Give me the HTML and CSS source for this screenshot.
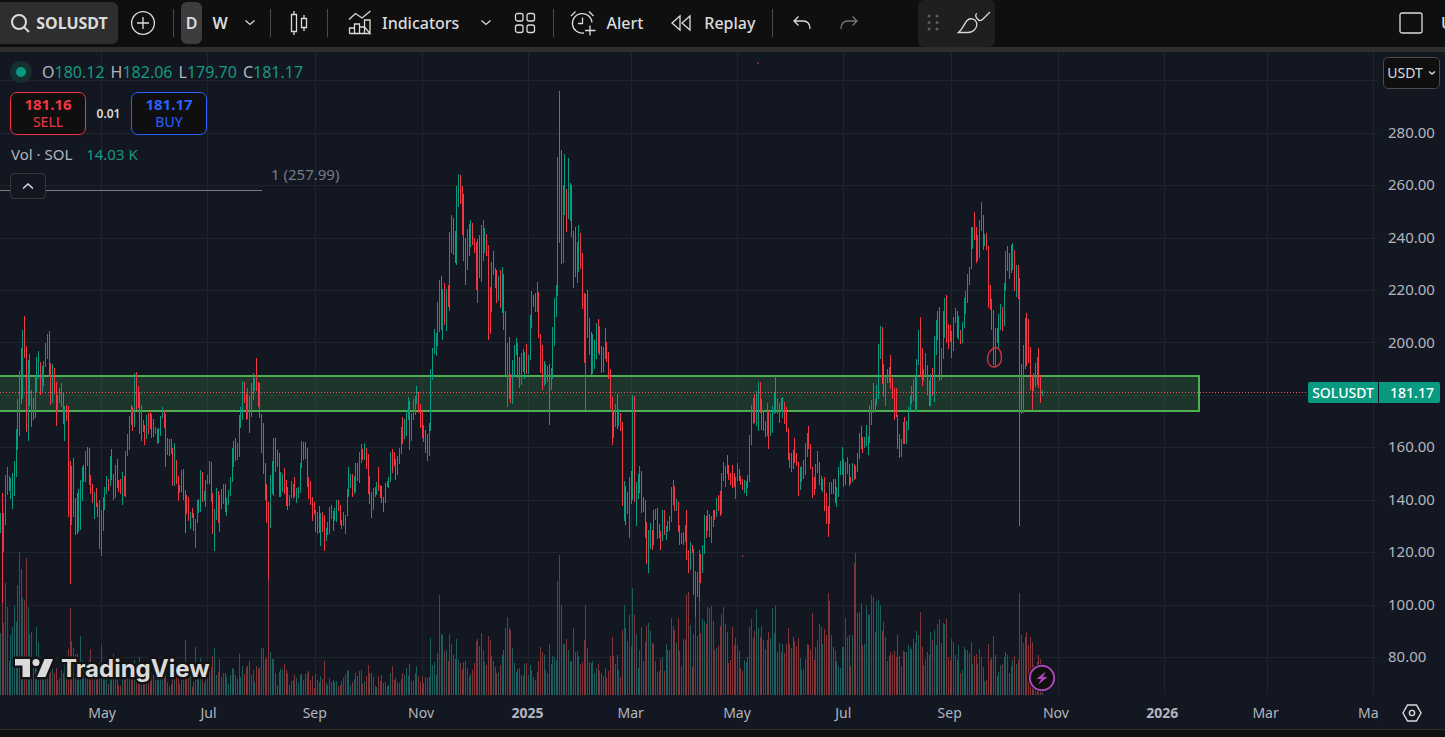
FILE: index.html
```html
<!DOCTYPE html>
<html lang="en">

<head>
    <meta charset="UTF-8">
    <meta name="viewport" content="width=device-width, initial-scale=1.0">
    <title>SOLUSDT 181.17</title>
    <link rel="stylesheet" href="styles.css">
</head>

<body>
    <header class="toolbar">
        <button class="symbol-btn">
            <svg width="20" height="20" viewBox="0 0 20 20"><circle cx="9" cy="9" r="7" stroke-width="2"/><path d="M14 14l5 5" stroke-width="2"/></svg>
            SOLUSDT
        </button>
        <button class="icon-btn add-btn" aria-label="Compare">
            <svg width="26" height="26" viewBox="0 0 26 26"><circle cx="13" cy="13" r="11.4"/><path d="M7 13h12M13 7v12"/></svg>
        </button>
        <span class="sep"></span>
        <button class="interval active">D</button>
        <button class="interval">W</button>
        <button class="chevron-btn" aria-label="Chart interval">
            <svg width="12" height="8" viewBox="0 0 12 8"><path d="M1.500 1.500l4.500 4 4.500-4"/></svg>
        </button>
        <span class="sep"></span>
        <button class="icon-btn candle-btn" aria-label="Candles">
            <svg width="20" height="26" viewBox="0 0 20 26"><path d="M2.500 4.500h5v17h-5zM5 1v3.500M5 21.500v3.500M12.500 8.500h5v9h-5zM15 5v3.500M15 17.500v3.500"/></svg>
        </button>
        <span class="sep"></span>
        <button class="text-btn">
            <svg width="24" height="26" viewBox="0 0 24 26"><path d="M1 9.500l6.500-6 6.500 4.500 8.500-7M1.500 23.500v-5.500h5v5.500M6.500 18v-4h5v9.500M11.500 17h5v6.500M16.500 17v-7h5.500v13.500zM1.500 23.500h20"/></svg>
            Indicators
        </button>
        <button class="chevron-btn" aria-label="Favorite indicators">
            <svg width="12" height="8" viewBox="0 0 12 8"><path d="M1.500 1.500l4.500 4 4.500-4"/></svg>
        </button>
        <button class="icon-btn templates-btn" aria-label="Templates">
            <svg width="22" height="22" viewBox="0 0 22 22"><rect x="1.500" y="1.500" width="7.500" height="7.500" rx="2"/><rect x="13" y="1.500" width="7.500" height="7.500" rx="2"/><rect x="1.500" y="13" width="7.500" height="7.500" rx="2"/><rect x="13" y="13" width="7.500" height="7.500" rx="2"/></svg>
        </button>
        <span class="sep"></span>
        <button class="text-btn alert-btn">
            <svg width="26" height="26" viewBox="0 0 26 26"><path d="M22 12.500A9.800 9.800 0 1 0 14 23M12.500 7.500v6h-4.500M1 6l4.500-4.500M19 1.500l4.500 4.500M20 15.500v10M15 20.500h10.500"/></svg>
            Alert
        </button>
        <button class="text-btn replay-btn">
            <svg width="24" height="20" viewBox="0 0 24 20"><path d="M10 3v14L2 10zM20 3v14l-8-7z"/></svg>
            Replay
        </button>
        <span class="sep"></span>
        <button class="icon-btn undo-btn" aria-label="Undo">
            <svg width="20" height="16" viewBox="0 0 20 16"><path d="M6.500 1.500L2 6l4.500 4.500M2 6h9q7 0 7 8"/></svg>
        </button>
        <button class="icon-btn redo-btn" aria-label="Redo" disabled>
            <svg width="20" height="16" viewBox="0 0 20 16"><path d="M13.500 1.500L18 6l-4.500 4.500M18 6H9q-7 0-7 8"/></svg>
        </button>
        <button class="layout-btn" aria-label="Layout">
            <svg width="24" height="22" viewBox="0 0 24 22"><rect x="1" y="1" width="22" height="20" rx="2"/></svg>
        </button>
        <button class="name-btn">Unnamed</button>

        <div class="drawing-bar">
            <svg class="grip" width="12" height="18" viewBox="0 0 12 18"><circle cx="2" cy="2" r="1.500"/><circle cx="10" cy="2" r="1.500"/><circle cx="2" cy="8.500" r="1.500"/><circle cx="10" cy="8.500" r="1.500"/><circle cx="2" cy="15" r="1.500"/><circle cx="10" cy="15" r="1.500"/></svg>
            <button class="brush-btn" aria-label="Brush">
                <svg width="34" height="24" viewBox="0 0 34 24"><path d="M1.500 21.500C6 18 7 13 10 9.500c3-3 8-2 9.500 2 1.500 5-3 10-8.500 10zM20 2.500c-2 1-1.500 3.500.5 5.500 2 2.500 3.500 2 5.500 0l7-7"/></svg>
            </button>
        </div>
    </header>

    <main class="chart">
        <div class="plot">
            <svg class="plot-svg" viewBox="0 52 1378 643" preserveAspectRatio="none">
                <path class="grid-line" d="M0 80.500H1378M0 133.500H1378M0 185.500H1378M0 238.500H1378M0 290.500H1378M0 342.500H1378M0 395.500H1378M0 447.500H1378M0 500.500H1378M0 552.500H1378M0 605.500H1378M0 657.500H1378"/>
                <path class="grid-line" d="M101.500 52V695M207.500 52V695M315.500 52V695M422.500 52V695M528.500 52V695M631.500 52V695M737.500 52V695M843.500 52V695M951.500 52V695M1058.500 52V695M1164.500 52V695M1267.500 52V695M1373.500 52V695"/>
                <path id="volUp" class="vol-up"/>
                <path id="volDown" class="vol-down"/>
                <rect class="zone" x="-2" y="376" width="1201" height="35"/>
                <path class="fib-line" d="M0 190.500H262"/>
                <path id="up" class="up"/>
                <path id="down" class="down"/>
                <path class="last-line" d="M0 392.500H1308"/>
                <path class="doodle" d="M994 348c-3.500 1.500-6.500 6-6.500 10 0 5.500 2.500 9 6.500 9s7.500-3.500 7.500-9c0-5.500-2-10-5-10.500zM757 63h1.500M742 556h1.500"/>
            </svg>

            <div class="legend">
                <div class="ohlc">
                    <span class="status"></span>
                    <span>O<b>180.12</b></span>
                    <span>H<b>182.06</b></span>
                    <span>L<b>179.70</b></span>
                    <span>C<b>181.17</b></span>
                </div>
                <div class="orders">
                    <button class="order sell"><strong>181.16</strong>SELL</button>
                    <span class="spread">0.01</span>
                    <button class="order buy"><strong>181.17</strong>BUY</button>
                </div>
                <div class="volume">Vol · SOL <b>14.03 K</b></div>
                <button class="collapse-btn" aria-label="Hide legend">
                    <svg width="12" height="8" viewBox="0 0 12 8"><path d="M1 6.500l5-4.500 5 4.500" stroke-width="1.600"/></svg>
                </button>
            </div>
            <span class="fib-label">1 (257.99)</span>

            <svg class="logo" width="220" height="36" viewBox="0 0 220 36">
                <g class="mark"><path d="M5 7h15v18h-7.500v-11.500h-7.500z"/><circle cx="26" cy="10.500" r="3.500"/><path d="M34.500 7h8.500l-7.500 18h-8.500z"/></g>
                <text x="51" y="25">TradingView</text>
            </svg>

            <button class="event-btn" aria-label="Events">
                <svg width="28" height="28" viewBox="0 0 28 28"><circle cx="14" cy="14" r="12.200"/><path class="bolt" d="M17.500 7.500l-9 7.500h4.500l-2.500 5.500 9-7.500h-4.500z"/></svg>
            </button>
        </div>

        <div class="price-scale">
            <button class="currency-btn">USDT
                <svg width="8" height="6" viewBox="0 0 8 6"><path d="M1 1.500l3 2.500 3-2.500" stroke-width="1.500"/></svg>
            </button>
            <ul class="prices">
                <li>280.00</li>
                <li>260.00</li>
                <li>240.00</li>
                <li>220.00</li>
                <li>200.00</li>
                <li></li>
                <li>160.00</li>
                <li>140.00</li>
                <li>120.00</li>
                <li>100.00</li>
                <li>80.00</li>
            </ul>
        </div>

        <div class="time-scale">
            <span>May</span>
            <span>Jul</span>
            <span>Sep</span>
            <span>Nov</span>
            <span class="year">2025</span>
            <span>Mar</span>
            <span>May</span>
            <span>Jul</span>
            <span>Sep</span>
            <span>Nov</span>
            <span class="year">2026</span>
            <span>Mar</span>
            <span>May</span>
        </div>
        <button class="settings-btn" aria-label="Scale settings">
            <svg width="20" height="18" viewBox="0 0 20 18"><path d="M5.500 1h9l4.500 8-4.500 8h-9l-4.500-8z" stroke-width="1.400"/><circle cx="10" cy="9" r="2.600" stroke-width="1.400"/></svg>
        </button>

        <div class="last-price"><span>SOLUSDT</span><span>181.17</span></div>
    </main>
    <footer class="bottom-bar"></footer>

    <script src="chart.js"></script>
</body>

</html>
```
FILE: styles.css
```css
* {
    box-sizing: border-box;
}

body {
    margin: 0;
    min-height: 100vh;
    display: flex;
    flex-direction: column;
    background: #0f0f0f;
    color: #dbdbdb;
    font-family: "Noto Sans", sans-serif;
    font-size: 15px;
    line-height: 20px;
    overflow-x: hidden;
}

button {
    display: flex;
    align-items: center;
    justify-content: center;
    flex-shrink: 0;
    padding: 0;
    border: none;
    background: none;
    color: inherit;
    font: inherit;
    cursor: pointer;
}

svg {
    display: block;
    fill: none;
    stroke: #dbdbdb;
    stroke-width: 1.3px;
}

svg [stroke-width="2"] {
    stroke-width: 2px;
}

/* Toolbar */
.toolbar {
    position: relative;
    display: flex;
    align-items: center;
    height: 47px;
    padding-bottom: 1px;
    font-size: 16px;
    font-weight: 500;
    overflow: hidden;
}

.toolbar button {
    height: 42px;
}

.toolbar .symbol-btn {
    width: 118px;
    gap: 6px;
    background: #2e2e2e;
    border-radius: 0 6px 6px 0;
    font-weight: 700;
}

.icon-btn {
    width: 40px;
}

.add-btn {
    width: 50px;
}

.sep {
    flex-shrink: 0;
    width: 1px;
    height: 28px;
    margin: 0 8px;
    background: #4a4a4a;
}

.add-btn + .sep {
    margin: 0 7px 0 5px;
}

.interval {
    width: 36px;
    font-weight: 600;
}

.interval.active {
    width: 21px;
    background: #3d3d3d;
    border-radius: 6px;
}

.chevron-btn {
    width: 24px;
}

.text-btn {
    gap: 10px;
    padding: 0 12px;
}

.text-btn + .chevron-btn {
    margin-left: 3px;
}

.templates-btn {
    margin-left: 7px;
}

.alert-btn {
    padding-left: 8px;
}

.replay-btn {
    padding: 0 9px 0 15px;
}

.undo-btn {
    margin-left: 1px;
}

.redo-btn {
    margin-left: 7px;
    opacity: 0.5;
}

.layout-btn {
    margin-left: auto;
}

.name-btn {
    width: 22px;
    padding-left: 18px;
    justify-content: flex-start;
    overflow: hidden;
}

.drawing-bar {
    position: absolute;
    top: 0;
    left: 918px;
    width: 77px;
    height: 47px;
    display: flex;
    align-items: center;
    gap: 18px;
    padding: 0 0 1px 9px;
    background: #1f1f1f;
    border-radius: 6px;
}

.grip {
    fill: #5d5d5d;
    stroke: none;
}

/* Chart */
.chart {
    position: relative;
    flex: 1;
    display: grid;
    grid-template-columns: 1fr 67px;
    grid-template-rows: 1fr 34px;
    background: #131722;
    border-top: 5px solid #2e2e2e;
    border-bottom: 1px solid #2e2e2e;
    color: #b2b5be;
}

.bottom-bar {
    height: 7px;
}

.plot {
    position: relative;
    min-height: 400px;
    overflow: hidden;
}

.plot-svg {
    position: absolute;
    width: 100%;
    height: 100%;
    stroke: none;
    shape-rendering: crispEdges;
}

.grid-line {
    stroke: #20242f;
    stroke-width: 1px;
}

.vol-up {
    fill: #1c5d5d;
}

.vol-down {
    fill: #813539;
}

.up {
    fill: #089981;
}

.down {
    fill: #f23645;
}

.zone {
    fill: rgba(76, 175, 80, 0.2);
    stroke: #4caf50;
    stroke-width: 2px;
}

.fib-line {
    stroke: #787b86;
    stroke-width: 1px;
}

.last-line {
    stroke: #f7525f;
    stroke-width: 1px;
    stroke-dasharray: 1 2;
}

.doodle {
    stroke: #d4323f;
    stroke-width: 1.4px;
    shape-rendering: auto;
}

.legend {
    position: relative;
    padding: 9px 0 0 10px;
}

.legend b {
    font-weight: 400;
    color: #159980;
}

.ohlc {
    display: flex;
    align-items: center;
    gap: 6px;
    height: 22px;
    font-size: 16px;
}

.status {
    width: 22px;
    height: 22px;
    margin-right: 4px;
    border: 6px solid #15302f;
    border-radius: 50%;
    background: #089981;
}

.orders {
    display: flex;
    align-items: center;
    margin-top: 9px;
}

.order {
    width: 76px;
    height: 43px;
    padding-bottom: 2px;
    flex-direction: column;
    border: 1px solid;
    border-radius: 7px;
    background: #0f0f0f;
    font-size: 14px;
    line-height: 17px;
}

.order strong {
    font-size: 15px;
}

.sell {
    color: #f23645;
}

.buy {
    color: #2962ff;
}

.spread {
    width: 45px;
    color: #dbdbdb;
    font-size: 12px;
    font-weight: 600;
    text-align: center;
}

.volume {
    margin: 9px 0 9px 1px;
}

.volume b {
    margin-left: 10px;
}

.collapse-btn {
    width: 36px;
    height: 26px;
    border: 1px solid #363636;
    border-radius: 4px;
    background: #131722;
}

.fib-label {
    position: absolute;
    top: 112px;
    left: 271px;
    color: #787b86;
}

.logo {
    position: absolute;
    left: 10px;
    bottom: 7px;
    fill: #dbdbdb;
    stroke: #131313;
    stroke-width: 5px;
    stroke-linejoin: round;
    paint-order: stroke;
}

.logo text {
    font-family: Inter, sans-serif;
    font-size: 24px;
    font-weight: 700;
}

.event-btn {
    position: absolute;
    left: 1028px;
    bottom: 3px;
    border-radius: 50%;
    background: #0f0f0f;
}

.event-btn svg {
    stroke: #ab47bc;
    stroke-width: 2px;
}

.event-btn .bolt {
    fill: #ab47bc;
    stroke: none;
}

/* Scales */
.price-scale {
    display: flex;
    flex-direction: column;
    padding: 5px 5px 29px;
}

.currency-btn {
    height: 32px;
    gap: 5px;
    border: 1px solid #4a4a4a;
    border-radius: 5px;
    background: #0f0f0f;
    color: #dbdbdb;
    font-size: 14px;
}

.prices {
    flex: 1;
    display: flex;
    flex-direction: column;
    justify-content: space-between;
    margin: 33px 0 0;
    padding: 0 0 0 5px;
    list-style: none;
}

.prices li {
    height: 20px;
}

.time-scale {
    display: flex;
    align-items: center;
    padding: 2px 0 0 49px;
    font-size: 14px;
    overflow: hidden;
}

.time-scale span {
    flex: 0 0 8%;
    text-align: center;
}

/* January and February are shorter than the other pairs of months */
.time-scale .year + span {
    margin-left: -3px;
}

.settings-btn {
    padding-top: 2px;
}

.year {
    font-weight: 700;
}

.last-price {
    position: absolute;
    top: 330px;
    right: 5px;
    display: grid;
    grid-template-columns: 70px 61px;
    gap: 1px;
    color: #fff;
    font-size: 14px;
    font-weight: 500;
    line-height: 21px;
    text-align: center;
}

.last-price span {
    background: #089981;
    border-radius: 2px 0 0 2px;
}

.last-price span + span {
    padding-left: 5px;
    border-radius: 0 2px 2px 0;
}
```
FILE: chart.js
```js
// one bar per day: direction (g/r) + x, high, low, volume height
const bars = `
g0 513 533 62,r2 493 603 102,g3 513 552 72,g5 475 525 112,g7 467 495 88,r9 476 491 34,g10 478 499 60,g12 473 509 68,g14 461 496 89,g16 429 477 73,g17 399 450 110,g19 371 436 143,r21 348 404 126,g22 330 399 97,r24 316 358 95,r26 346 432 137,g28 360 441 88,r29 354 406 61,r31 390 427 63,r33 398 420 35,g35 376 418 37,g36 357 392 68,g38 351 379 53,r40 362 395 33,g42 366 392 32,g43 361 386 25,g45 343 367 28,g47 334 359 28,r49 331 377 30,r50 363 405 32,g52 364 403 26,r54 368 394 22,r56 382 426 27,g57 395 411 15,g59 388 403 17,g61 383 407 25,r63 392 424 22,g64 406 441 30,r66 405 421 28,r68 406 517 46,r70 461 584 87,g71 466 525 54,r73 458 517 47,r75 498 535 41,r77 493 534 41,g78 489 532 32,g80 480 530 59,g82 467 501 35,r83 465 482 32,g85 451 482 26,r87 447 466 24,r89 448 485 35,r90 475 494 46,r92 484 503 24,g94 492 519 24,r96 488 507 26,r97 503 517 21,r99 500 549 32,g101 510 556 50,g103 497 531 32,g104 487 510 26,g106 476 494 18,r108 479 491 11,g110 456 486 22,r111 449 480 26,r113 474 500 41,g115 465 498 28,r117 459 488 24,r118 480 492 10,r120 479 494 9,g122 472 505 22,r124 476 496 19,g125 451 497 25,g127 434 456 22,g129 416 450 26,g131 405 425 24,r132 407 431 25,g134 373 427 35,r136 372 410 31,r138 386 408 25,r139 392 434 38,r141 405 441 26,g143 420 432 19,r144 425 445 20,g146 415 439 22,r148 413 434 18,r150 411 429 20,r151 414 438 22,r153 419 437 20,g155 427 434 15,r157 429 444 18,g158 428 443 17,g160 416 436 19,g162 407 418 21,r164 410 428 20,r165 414 467 32,r167 438 455 13,g169 439 456 9,r171 439 454 11,r172 448 486 24,g174 443 486 22,r176 460 484 19,r178 476 501 23,g179 485 493 11,g181 470 492 15,r183 469 500 18,r185 490 533 55,r186 495 514 33,r188 497 521 27,g190 512 529 22,r192 508 518 8,r193 513 531 13,g195 519 548 48,g197 500 523 29,g198 499 513 24,g200 470 512 37,r202 472 502 26,g204 491 501 12,g205 480 507 22,g207 475 484 18,g209 461 484 26,r211 462 502 28,r212 493 534 39,g214 509 551 47,g216 488 520 20,r218 491 523 23,g219 495 532 36,g221 489 509 18,g223 484 504 22,r225 484 512 22,g226 498 516 18,g228 490 505 11,g230 477 496 20,g232 448 482 27,g233 441 467 26,r235 438 461 20,g237 443 460 16,g239 415 457 41,g240 407 428 18,g242 381 420 29,r244 382 403 21,r246 394 420 28,g247 388 419 29,r249 396 433 34,g251 383 417 20,g253 373 400 25,g254 378 391 13,r256 358 391 29,r258 382 407 26,r259 383 418 28,r261 414 453 47,r263 423 474 47,r265 463 500 36,r266 484 523 38,r268 502 579 118,g270 475 528 43,g272 461 494 36,g273 438 496 36,r275 438 472 22,r277 450 467 10,r279 453 497 23,g280 472 497 26,g282 474 492 25,r284 468 494 31,r286 480 506 25,r287 487 510 22,g289 495 506 10,g291 481 498 14,g293 484 499 15,r294 477 497 20,g296 488 503 17,g298 487 498 12,
g300 463 493 20,g301 441 468 21,r303 442 460 15,r305 442 459 21,r307 448 487 22,r308 477 499 24,r310 481 505 15,r312 497 521 19,r314 502 514 7,r315 510 532 21,g317 512 534 15,r319 506 533 13,g320 513 546 19,r322 512 532 16,r324 515 551 34,g326 528 541 12,g327 522 535 10,g329 507 534 17,g331 505 519 13,r333 511 531 15,g334 508 521 13,g336 500 522 14,r338 500 511 9,r340 505 525 10,g341 520 529 14,g343 512 526 17,g345 515 534 21,g347 489 516 25,g348 467 497 24,g350 474 488 9,r352 474 497 13,g354 476 494 16,g355 463 492 22,r357 463 481 19,g359 452 483 24,g361 444 463 25,r362 449 460 11,g364 443 460 14,r366 448 469 19,r368 454 494 30,r369 476 504 22,r371 492 518 22,g373 488 510 18,r375 487 497 9,g376 482 495 8,r378 467 491 19,r380 485 498 14,r381 486 503 20,r383 497 512 12,g385 483 503 13,g387 481 487 9,g388 477 488 10,g390 452 482 22,r392 449 473 29,r394 452 466 15,r395 459 480 17,g397 456 475 13,g399 448 464 12,g401 427 454 16,r402 417 444 22,g404 419 439 20,g406 410 436 27,g408 397 420 19,r409 401 450 31,g411 413 441 14,g413 399 420 15,g415 396 415 22,g416 386 404 29,r418 392 413 19,r420 404 428 13,r422 411 438 19,g423 425 442 12,r425 430 453 18,r427 434 461 17,g429 423 456 18,g430 369 431 57,g432 348 380 30,g434 329 354 33,g436 333 356 20,g437 302 346 42,g439 280 332 100,r441 276 330 61,g442 289 340 60,r444 283 325 44,g446 289 331 45,r448 285 307 34,g449 232 311 61,g451 215 253 51,r453 218 255 40,r455 231 263 36,g456 186 265 56,g458 174 207 35,r460 175 204 32,r462 186 235 26,r463 194 261 33,r465 238 285 34,g467 229 270 27,r469 224 256 18,g470 220 247 21,r472 223 245 25,r474 238 253 32,r476 242 290 54,g477 239 303 56,r479 235 278 49,g481 225 282 62,g483 220 261 45,g484 228 253 33,r486 234 256 30,r488 245 340 59,r490 287 334 55,g491 262 312 39,r493 251 275 34,r495 268 288 28,r496 270 303 22,g498 276 301 23,r500 270 308 30,g502 267 313 40,r503 274 330 45,r505 311 376 67,g507 343 407 78,r509 337 399 67,r510 374 403 65,g512 360 404 47,g514 345 377 32,g516 338 355 23,r517 343 378 26,r519 357 388 27,g521 353 385 20,r523 349 372 19,g524 352 379 31,r526 344 374 32,g528 355 374 20,g530 315 360 30,g531 291 328 25,r533 295 307 18,r535 293 312 15,g537 282 312 23,r538 292 338 34,r540 334 373 48,r542 345 390 43,g544 361 386 40,g545 364 384 25,g547 366 382 22,r549 364 425 51,g551 368 390 31,g552 327 379 39,g554 298 346 38,g556 285 317 35,g557 157 296 114,
r559 91 243 140,r561 150 264 90,g563 185 263 51,g564 154 215 51,r566 189 232 56,g568 158 219 45,g570 183 221 34,r571 185 237 34,r573 231 288 67,r575 227 277 43,g577 242 283 44,g578 225 272 39,r580 233 269 31,r582 253 309 33,r584 293 363 55,g585 294 410 90,r587 290 338 47,r589 318 355 33,r591 332 375 32,g592 334 374 34,g594 340 369 22,g596 323 359 27,r598 319 353 31,r599 326 355 24,r601 346 373 22,r603 347 372 19,g605 328 359 27,r606 342 362 17,r608 352 379 24,r610 369 409 39,r612 397 445 58,r613 410 438 39,g615 404 427 31,r617 394 429 40,g618 409 426 25,r620 413 431 18,r622 422 506 65,g624 481 521 90,r625 486 525 67,g627 492 514 54,g629 477 538 80,r631 471 504 49,g632 395 500 107,r634 396 502 80,g636 482 526 61,g638 474 499 27,r639 466 493 45,r641 471 513 68,r643 497 512 34,r645 500 538 53,r646 522 564 69,g648 530 573 72,g650 523 549 64,r652 530 550 52,g653 510 545 51,g655 509 520 34,r657 508 539 23,g659 524 538 24,r660 531 550 36,g662 510 541 38,r664 510 535 24,g666 526 540 51,g667 521 532 45,g669 516 531 45,g671 487 522 77,g673 480 505 69,r674 486 511 65,g676 499 511 52,r678 502 532 77,r679 525 545 44,g681 533 544 29,r683 532 545 56,g685 525 542 55,r686 510 560 100,r688 550 573 103,g690 542 570 70,r692 545 553 28,r693 549 595 61,g695 571 617 112,r697 572 597 59,g699 550 601 94,r700 554 583 62,g702 545 573 76,g704 515 554 74,r706 516 538 71,g707 510 531 88,r709 514 537 87,g711 516 543 89,g713 510 527 74,r714 510 520 45,g716 498 517 47,r718 495 511 49,r720 491 516 69,g721 473 514 81,g723 462 481 88,g725 466 487 71,r727 455 474 63,r728 465 480 32,r730 473 485 35,r732 465 488 68,r734 473 487 50,g735 477 499 57,g737 463 481 50,
r739 469 481 44,r740 476 485 27,r742 479 490 24,g744 480 493 35,g746 481 496 33,g747 475 488 38,g749 435 482 68,g751 405 445 76,g753 398 424 57,r754 394 423 64,g756 391 426 86,g758 382 431 67,r760 382 413 58,r761 399 430 69,r763 410 431 55,r765 421 437 46,g767 403 436 55,r768 411 449 63,g770 413 436 57,g772 406 433 87,g774 392 414 62,r775 375 413 89,g777 399 414 43,r779 403 423 52,r781 398 412 43,g782 397 418 51,r784 402 424 42,r786 407 432 51,r788 428 460 67,g789 453 468 51,g791 453 472 47,r793 450 469 58,r794 438 463 54,r796 453 466 49,r798 462 496 57,g800 467 490 37,g801 466 482 25,g803 460 479 26,g805 443 475 36,g807 433 457 51,r808 426 449 50,r810 444 469 45,r812 467 498 82,r814 477 495 35,g815 464 489 48,r817 451 473 55,r819 462 485 71,r821 476 490 68,g822 479 492 51,r824 477 511 66,r826 493 524 60,r828 506 537 102,g829 482 524 94,g831 482 494 60,r833 479 494 48,r835 479 503 45,g836 487 507 34,g838 467 497 29,g840 461 475 27,g842 447 475 48,r843 459 487 48,g845 462 485 77,g847 457 474 58,r849 464 486 60,r850 477 484 29,g852 463 482 60,r854 464 480 132,g855 466 479 142,g857 453 472 82,g859 433 459 83,r861 426 449 92,r862 437 453 50,g864 437 448 51,g866 425 446 90,g868 436 455 81,g869 405 443 80,g871 400 425 100,g873 383 413 98,r875 399 411 63,g876 385 405 94,g878 344 399 95,g880 326 359 90,r882 327 384 64,r883 364 397 73,g885 376 406 58,r887 369 383 34,g889 367 383 39,r890 355 389 43,r892 378 399 40,r894 388 420 44,r896 388 417 38,r897 415 449 60,r899 434 458 39,g901 439 457 29,g903 422 444 44,r904 417 444 43,g906 421 444 43,g908 407 430 50,g910 396 411 48,g911 386 404 46,g913 379 401 56,r915 377 412 52,g916 359 412 64,g918 330 365 60,r920 317 377 83,r922 348 386 48,g923 369 381 30,g925 353 376 36,r927 365 395 43,r929 380 406 40,g930 374 406 63,r932 368 396 55,g934 336 402 65,g936 320 355 50,g937 311 340 71,r939 307 381 76,g941 348 380 52,g943 311 359 72,
g944 298 338 71,r946 295 343 76,r948 324 349 38,r950 325 342 35,r951 331 358 56,g953 317 351 53,g955 308 323 40,r957 311 338 35,g958 316 340 50,r960 330 344 22,g962 322 343 25,g964 298 328 48,g965 291 314 45,g967 274 303 45,g969 267 285 42,g971 227 269 53,g972 227 249 31,r974 212 240 39,r976 227 263 41,g977 235 261 31,g979 220 258 46,g981 202 231 38,r983 215 250 28,g984 234 246 14,r986 233 250 15,r988 246 308 51,r990 285 310 35,r991 299 330 37,r993 310 365 59,g995 328 366 40,r997 328 343 19,g998 314 349 23,g1000 304 330 30,r1002 307 331 31,g1004 283 326 38,g1005 251 291 43,r1007 246 271 40,r1009 253 279 22,g1011 245 273 29,g1012 243 270 35,r1014 250 291 39,g1016 265 297 31,r1018 265 299 35,r1019 278 526 102,r1021 364 414 60,g1023 345 413 52,g1025 318 369 58,r1026 313 366 63,r1028 319 363 50,r1030 347 390 58,r1032 375 410 53,g1033 373 391 30,g1035 363 387 27,g1037 357 385 33,r1038 348 388 40,r1040 375 403 36,g1042 390 396 17`;

const volumeBase = 695;
const paths = { up: "", down: "", volUp: "", volDown: "" };

bars.trim().split(/,\s*/).forEach(function (bar) {
    const isUp = bar[0] === "g";
    const [x, high, low, volume] = bar.slice(1).split(" ").map(Number);

    paths[isUp ? "up" : "down"] += `M${x} ${high}h1V${low}h-1z`;
    paths[isUp ? "volUp" : "volDown"] += `M${x} ${volumeBase - volume}h1V${volumeBase}h-1z`;
});

for (const id in paths) {
    document.getElementById(id).setAttribute("d", paths[id]);
}
```
